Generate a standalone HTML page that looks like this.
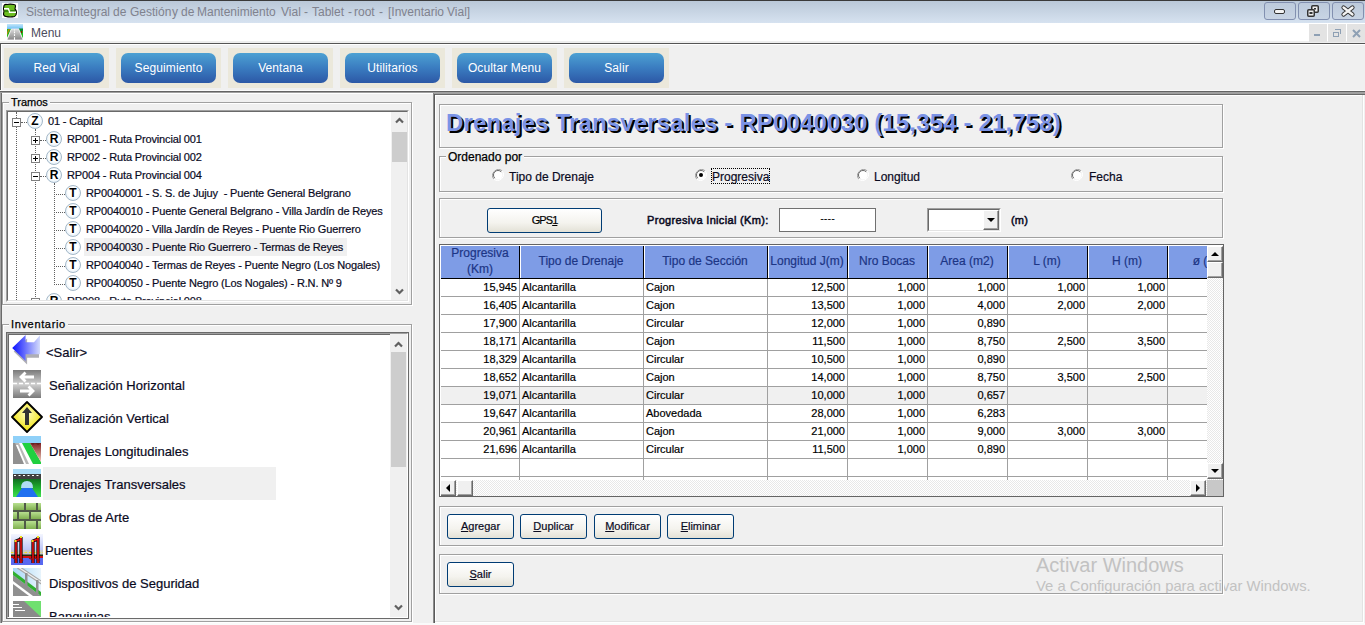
<!DOCTYPE html>
<html><head><meta charset="utf-8">
<style>
*{box-sizing:border-box;margin:0;padding:0}
html,body{width:1365px;height:625px;overflow:hidden;background:#f0f0f0;font-family:"Liberation Sans",sans-serif;color:#000}
.dk{-webkit-text-stroke:0.2px currentColor}
.a{position:absolute}
.t{position:absolute;white-space:nowrap;line-height:1}
/* title bar */
#tb{left:0;top:0;width:1365px;height:23px;background:linear-gradient(#bac8d8,#d6e2f0);border-top:1px solid #3a3a3a}
.wb{position:absolute;top:2px;width:32px;height:18px;border:1px solid #8290b0;border-radius:3px;background:linear-gradient(#bccadb,#c8d4e4)}
#mb{left:0;top:23px;width:1365px;height:20px;background:#fff}
.mdi{position:absolute;top:24px;height:18px;background:#e3e3e3}
/* toolbar */
.pn{position:absolute;top:48px;width:105px;height:40px;background:#ebe8db}
.bb{position:absolute;top:53px;width:95px;height:30px;border-radius:7px;background:linear-gradient(#4da1d3,#3a7cc0 50%,#2c58a6);color:#fff;font-size:12px;text-align:center;line-height:30px;letter-spacing:0.1px}
/* group box */
.gb{position:absolute;border:1px solid #a0a0a0;box-shadow:inset 1px 1px 0 #fff,1px 1px 0 #fff}
.gt{position:absolute;background:#f0f0f0;padding:0 2px;font-size:11px;line-height:11px;white-space:nowrap;-webkit-text-stroke:0.25px #000}
.sunk{position:absolute;border-top:1px solid #a0a0a0;border-left:1px solid #a0a0a0;border-right:1px solid #fff;border-bottom:1px solid #fff;}
.sunk>.in{position:absolute;left:0;top:0;right:0;bottom:0;border-top:1px solid #696969;border-left:1px solid #696969;border-right:1px solid #e3e3e3;border-bottom:1px solid #e3e3e3;background:#fff;overflow:hidden}
.xpb{position:absolute;border:1px solid #003c74;border-radius:3px;background:linear-gradient(#fff,#f4f3ee 60%,#e3e1d6);font-size:11px;text-align:center;white-space:nowrap}
.tr{position:absolute;left:0;white-space:nowrap;font-size:11px;line-height:18px;height:18px}
.ic{position:absolute;width:16px;height:16px;border-radius:50%;border:1px solid #a4b8c8;background:radial-gradient(circle at 50% 45%,#fff 45%,#d4e6f4);font:bold 12px/14px "Liberation Sans",sans-serif;text-align:center;color:#000}
.bx{position:absolute;width:9px;height:9px;border:1px solid #808080;background:#fff}
.dv{position:absolute;border-left:1px dotted #606060;width:0}
.dh{position:absolute;border-top:1px dotted #606060;height:0}
.inv{position:absolute;left:49px;font-size:13px;white-space:nowrap;line-height:13px}
.cell{position:absolute;font-size:11px;line-height:11px;white-space:nowrap}
</style></head><body>
<!-- TITLE BAR -->
<div id="tb" class="a"></div>
<svg class="a" style="left:0;top:0" width="20" height="20" viewBox="0 0 20 20">
<rect x="2" y="3" width="16" height="15" fill="#fff"/>
<path d="M4 5.5 Q5 4 7 4.5 Q10 3.8 14 4.5 Q15.5 4.5 15.5 6 L15 9 Q16.5 10.5 16.5 12.5 Q16.5 15.5 14.5 16.5 Q10 17.5 6 16.5 Q3.5 16 3.5 14 L4 11 Q3 9 4 5.5Z" fill="#6cbd22" stroke="#000" stroke-width="1.1"/>
<path d="M4 8.7 L8.3 8.7 L9.6 12.3 L16 12.3" fill="none" stroke="#fff" stroke-width="1.5"/>
<path d="M5 10 L8 10 L8.8 12 L5 12Z" fill="#3a8a10"/><path d="M10.5 10 L15 10 L15 11.3 L10 11.3Z" fill="#2f7a10"/>
</svg>
<div class="t" style="left:26px;top:6px;font-size:12px;color:#80828e">Sistema</div><div class="t" style="left:70px;top:6px;font-size:12px;color:#80828e">Integral</div><div class="t" style="left:113px;top:6px;font-size:12px;color:#80828e">de</div><div class="t" style="left:130px;top:6px;font-size:12px;color:#80828e">Gestión</div><div class="t" style="left:172px;top:6px;font-size:12px;color:#80828e">y</div><div class="t" style="left:181px;top:6px;font-size:12px;color:#80828e">de</div><div class="t" style="left:197px;top:6px;font-size:12px;color:#80828e">Mantenimiento</div><div class="t" style="left:281px;top:6px;font-size:12px;color:#80828e">Vial</div><div class="t" style="left:304px;top:6px;font-size:12px;color:#80828e">-</div><div class="t" style="left:312px;top:6px;font-size:12px;color:#80828e">Tablet</div><div class="t" style="left:348px;top:6px;font-size:12px;color:#80828e">-</div><div class="t" style="left:354px;top:6px;font-size:12px;color:#80828e">root</div><div class="t" style="left:379px;top:6px;font-size:12px;color:#80828e">-</div><div class="t" style="left:388px;top:6px;font-size:12px;color:#80828e">[Inventario</div><div class="t" style="left:447px;top:6px;font-size:12px;color:#80828e">Vial]</div>
<div class="wb" style="left:1264px"><div class="a" style="left:9px;top:6px;width:11px;height:5px;border:1.5px solid #333;border-radius:2px;background:#f3f3f3"></div></div>
<div class="wb" style="left:1298px"><svg class="a" style="left:8px;top:2px" width="12" height="12" viewBox="0 0 12 12"><rect x="4.75" y="0.75" width="6.5" height="6.5" rx="1" fill="#eee" stroke="#333" stroke-width="1.5"/><rect x="7" y="3" width="2" height="1.5" fill="#333"/><rect x="0.75" y="4.75" width="6.5" height="6.5" rx="1" fill="#eee" stroke="#333" stroke-width="1.5"/><rect x="2.5" y="7" width="3" height="2" fill="#333"/></svg></div>
<div class="wb" style="left:1332px"><svg class="a" style="left:9px;top:3px;overflow:visible" width="12" height="10" viewBox="0 0 12 10"><path d="M1.5 1.5 L10.5 8.5 M10.5 1.5 L1.5 8.5" stroke="#333" stroke-width="4.2" stroke-linecap="round"/><path d="M1.5 1.5 L10.5 8.5 M10.5 1.5 L1.5 8.5" stroke="#f4f4f4" stroke-width="2.3" stroke-linecap="round"/></svg></div>
<!-- MENU BAR -->
<div id="mb" class="a"></div>
<div class="a" style="left:0;top:41px;width:1365px;height:2px;background:#eeeeee"></div>
<svg class="a" style="left:7px;top:24px" width="16" height="16" viewBox="0 0 16 16">
<defs><linearGradient id="msk" x1="0" x2="0" y1="0" y2="1"><stop offset="0" stop-color="#c4e6fa"/><stop offset="1" stop-color="#6cc0f4"/></linearGradient>
<linearGradient id="mrd" x1="0" x2="0" y1="0" y2="1"><stop offset="0" stop-color="#dcdcdc"/><stop offset="1" stop-color="#858585"/></linearGradient></defs>
<rect width="16" height="5" fill="url(#msk)"/><rect y="5" width="16" height="11" fill="#fff"/>
<path d="M0 5 L4.5 5 L0 14Z" fill="#1cc01c"/><path d="M1.5 5 L3 5 L0 11 L0 9Z" fill="#d07810"/>
<path d="M11.5 5 L16 5 L16 15Z" fill="#1cc01c"/><rect x="12" y="4.5" width="4" height="2.5" fill="#0a8a2a"/><ellipse cx="14.5" cy="8" rx="0.8" ry="1" fill="#a00000"/>
<path d="M4.3 5 L11.7 5 L16 16 L0 16Z" fill="url(#mrd)" stroke="#f2eaf2" stroke-width="0.9"/>
<path d="M7.5 5.5 L7.5 6.5 M7.5 7.5 L7.5 9.3 M7.5 10.3 L7.5 12 M7.5 13.2 L7.5 16" stroke="#fff" stroke-width="1.1"/>
</svg>
<div class="t" style="left:31px;top:27px;font-size:12px;color:#4c4c5c">Menu</div>
<div class="mdi" style="left:1309px;width:18px"><div class="a" style="left:5px;top:10px;width:6px;height:2px;background:#8ea0b4"></div></div>
<div class="mdi" style="left:1328px;width:18px"><div class="a" style="left:7px;top:5px;width:6px;height:5px;border:1.5px solid #8ea0b4;border-bottom:none;border-left:none"></div><div class="a" style="left:5px;top:8px;width:6px;height:5px;border:1.5px solid #8ea0b4"></div></div>
<div class="mdi" style="left:1347px;width:18px"><svg class="a" style="left:5px;top:5px" width="9" height="9"><path d="M1 1 L8 8 M8 1 L1 8" stroke="#8ea0b4" stroke-width="2"/></svg></div>
<div class="a" style="left:0;top:43px;width:1365px;height:1px;background:#555"></div>
<div class="a" style="left:0;top:43px;width:1px;height:49px;background:#555"></div>
<div class="a" style="left:1px;top:44px;width:1364px;height:1px;background:#fff"></div>
<div class="a" style="left:1px;top:44px;width:1px;height:47px;background:#fff"></div>
<!-- toolbar panels -->
<div class="pn" style="left:4px"></div><div class="pn" style="left:116px"></div><div class="pn" style="left:228px"></div><div class="pn" style="left:340px"></div><div class="pn" style="left:452px"></div><div class="pn" style="left:564px"></div>
<div class="bb" style="left:9px">Red Vial</div>
<div class="bb" style="left:121px">Seguimiento</div>
<div class="bb" style="left:233px">Ventana</div>
<div class="bb" style="left:345px">Utilitarios</div>
<div class="bb" style="left:457px">Ocultar Menu</div>
<div class="bb" style="left:569px">Salir</div>
<!-- separator -->
<div class="a" style="left:0;top:90px;width:1365px;height:1px;background:#fafafa"></div>
<div class="a" style="left:0;top:91px;width:1365px;height:1px;background:#646464"></div>
<div class="a" style="left:0;top:92px;width:1365px;height:1px;background:#a0a0a0"></div>
<!-- LEFT PANEL -->
<div class="a" style="left:0;top:93px;width:433px;height:1px;background:#fff"></div>
<div class="a" style="left:0;top:93px;width:1px;height:530px;background:#a0a0a0"></div>
<div class="a" style="left:1px;top:93px;width:1px;height:530px;background:#6a6a6a"></div>
<div class="a" style="left:0;top:623px;width:433px;height:2px;background:#fafafa"></div>

<!-- Tramos group -->
<div class="gb" style="left:2px;top:102px;width:410px;height:203px"></div>
<div class="gt" style="left:9px;top:97px">Tramos</div>
<div class="sunk" style="left:6px;top:110px;width:403px;height:192px"><div class="in" id="tree">
<div class="a" style="left:76px;top:126px;width:263px;height:18px;background:#f0f0f0"></div>
<div class="dv" style="left:8px;top:0;height:190px"></div>
<div class="dv" style="left:27px;top:17px;height:172px"></div>
<div class="dv" style="left:46px;top:71px;height:100px"></div>
<div class="dh" style="left:13px;top:10px;width:6px"></div>
<div class="bx" style="left:4px;top:6px"><div class="a" style="left:1px;top:3px;width:5px;height:1px;background:#000"></div></div>
<div class="ic" style="left:19px;top:1px">Z</div>
<div class="tr dk" style="left:40px;top:0px;letter-spacing:-0.15px;color:#0a0a1e">01 - Capital</div>
<div class="dh" style="left:32px;top:28px;width:6px"></div>
<div class="bx" style="left:23px;top:24px"><div class="a" style="left:1px;top:3px;width:5px;height:1px;background:#000"></div><div class="a" style="left:3px;top:1px;width:1px;height:5px;background:#000"></div></div>
<div class="ic" style="left:38px;top:19px">R</div>
<div class="tr dk" style="left:59px;top:18px;letter-spacing:-0.15px;color:#0a0a1e">RP001 - Ruta Provincial 001</div>
<div class="dh" style="left:32px;top:46px;width:6px"></div>
<div class="bx" style="left:23px;top:42px"><div class="a" style="left:1px;top:3px;width:5px;height:1px;background:#000"></div><div class="a" style="left:3px;top:1px;width:1px;height:5px;background:#000"></div></div>
<div class="ic" style="left:38px;top:37px">R</div>
<div class="tr dk" style="left:59px;top:36px;letter-spacing:-0.15px;color:#0a0a1e">RP002 - Ruta Provincial 002</div>
<div class="dh" style="left:32px;top:64px;width:6px"></div>
<div class="bx" style="left:23px;top:60px"><div class="a" style="left:1px;top:3px;width:5px;height:1px;background:#000"></div></div>
<div class="ic" style="left:38px;top:55px">R</div>
<div class="tr dk" style="left:59px;top:54px;letter-spacing:-0.15px;color:#0a0a1e">RP004 - Ruta Provincial 004</div>
<div class="dh" style="left:46px;top:82px;width:11px"></div>
<div class="ic" style="left:57px;top:73px">T</div>
<div class="tr dk" style="left:78px;top:72px;letter-spacing:-0.15px;color:#0a0a1e">RP0040001 - S. S. de Jujuy &nbsp;- Puente General Belgrano</div>
<div class="dh" style="left:46px;top:100px;width:11px"></div>
<div class="ic" style="left:57px;top:91px">T</div>
<div class="tr dk" style="left:78px;top:90px;letter-spacing:-0.15px;color:#0a0a1e">RP0040010 - Puente General Belgrano - Villa Jardín de Reyes</div>
<div class="dh" style="left:46px;top:118px;width:11px"></div>
<div class="ic" style="left:57px;top:109px">T</div>
<div class="tr dk" style="left:78px;top:108px;letter-spacing:-0.15px;color:#0a0a1e">RP0040020 - Villa Jardín de Reyes - Puente Rio Guerrero</div>
<div class="dh" style="left:46px;top:136px;width:11px"></div>
<div class="ic" style="left:57px;top:127px">T</div>
<div class="tr dk" style="left:78px;top:126px;letter-spacing:-0.15px;color:#0a0a1e">RP0040030 - Puente Rio Guerrero - Termas de Reyes</div>
<div class="dh" style="left:46px;top:154px;width:11px"></div>
<div class="ic" style="left:57px;top:145px">T</div>
<div class="tr dk" style="left:78px;top:144px;letter-spacing:-0.15px;color:#0a0a1e">RP0040040 - Termas de Reyes - Puente Negro (Los Nogales)</div>
<div class="dh" style="left:46px;top:172px;width:11px"></div>
<div class="ic" style="left:57px;top:163px">T</div>
<div class="tr dk" style="left:78px;top:162px;letter-spacing:-0.15px;color:#0a0a1e">RP0040050 - Puente Negro (Los Nogales) - R.N. Nº 9</div>
<div class="dh" style="left:32px;top:190px;width:6px"></div>
<div class="bx" style="left:23px;top:186px"><div class="a" style="left:1px;top:3px;width:5px;height:1px;background:#000"></div><div class="a" style="left:3px;top:1px;width:1px;height:5px;background:#000"></div></div>
<div class="ic" style="left:38px;top:181px">R</div>
<div class="tr dk" style="left:59px;top:180px;letter-spacing:-0.15px;color:#0a0a1e">RP008 - Ruta Provincial 008</div>
<div class="a" style="left:383px;top:0;width:16px;height:188px;background:#f0f0f0">
<svg class="a" style="left:4px;top:5px" width="9" height="7"><path d="M1 5.5 L4.5 2 L8 5.5" fill="none" stroke="#606060" stroke-width="2.2"/></svg>
<div class="a" style="left:1px;top:20px;width:15px;height:30px;background:#cdcdcd"></div>
<svg class="a" style="left:4px;top:176px" width="9" height="7"><path d="M1 1.5 L4.5 5 L8 1.5" fill="none" stroke="#606060" stroke-width="2.2"/></svg>
</div>
</div></div>

<!-- Inventario group -->
<div class="gb" style="left:2px;top:324px;width:410px;height:298px"></div>
<div class="gt" style="left:9px;top:319px;letter-spacing:0.65px">Inventario</div>
<div class="a" style="left:6px;top:332px;width:403px;height:287px;border:1px solid #6a6a6a"><div class="a" style="left:0;top:0;right:0;bottom:0;border-top:1px solid #a0a0a0;border-left:1px solid #a0a0a0;border-right:1px solid #fff;border-bottom:1px solid #fff;background:#fff;overflow:hidden;box-shadow:inset 1px 1px 0 #6a6a6a" id="inv">
<div class="a" style="left:35px;top:133px;width:233px;height:33px;background:#f0f0f0"></div>
<div class="a" style="left:3px;top:0px;line-height:0"><svg width="31" height="31" viewBox="0 0 31 31"><defs><linearGradient id="gs" x1="0" x2="1"><stop offset="0" stop-color="#0a10ff"/><stop offset="1" stop-color="#d4dcfc"/></linearGradient></defs>
<path d="M2.7 17.6 L16.1 4.5 L16.1 11.7 L24.5 11.7 L28 7.5 L28 23.8 L16.1 23.8 L16.1 30.5 Z" fill="#a0a0a8" opacity="0.85"/>
<path d="M1.2 14.1 L14.6 1 L14.6 8.2 L23 8.2 L29 1.2 L29 20.3 L14.6 20.3 L14.6 27 Z" fill="url(#gs)"/></svg></div>
<div class="inv dk" style="left:38px;top:12px;color:#0a0a1e">&lt;Salir&gt;</div>
<div class="a" style="left:5px;top:36px;line-height:0"><svg width="28" height="28" viewBox="0 0 28 28"><defs><linearGradient id="gh" x1="0" x2="0" y1="0" y2="1"><stop offset="0" stop-color="#7a7a7a"/><stop offset="0.5" stop-color="#d0d0d0"/><stop offset="1" stop-color="#7a7a7a"/></linearGradient></defs>
<rect width="28" height="28" fill="url(#gh)"/><path d="M0 13.5 L28 13.5" stroke="#fff" stroke-width="1.4" stroke-dasharray="4 2"/>
<path d="M21 7 L8 7 M12.5 2.5 L8 7 L12.5 11.5" stroke="#fff" stroke-width="2.8" fill="none"/>
<path d="M7 21 L20 21 M15.5 16.5 L20 21 L15.5 25.5" stroke="#fff" stroke-width="2.8" fill="none"/></svg></div>
<div class="inv dk" style="left:41px;top:45px;color:#0a0a1e">Señalización Horizontal</div>
<div class="a" style="left:3px;top:67px;line-height:0"><svg width="32" height="32" viewBox="0 0 32 32"><defs><radialGradient id="gy" cx="0.5" cy="0.4" r="0.6"><stop offset="0" stop-color="#ffffc0"/><stop offset="1" stop-color="#f0e000"/></radialGradient></defs>
<path d="M16 1 L31 16 L16 31 L1 16 Z" fill="url(#gy)" stroke="#000" stroke-width="1.8" stroke-linejoin="round"/>
<path d="M16 6 L21 12 L18 12 L18 24 L14 24 L14 12 L11 12 Z" fill="#333"/></svg></div>
<div class="inv dk" style="left:41px;top:78px;color:#0a0a1e">Señalización Vertical</div>
<div class="a" style="left:5px;top:102px;line-height:0"><svg width="28" height="28" viewBox="0 0 28 28"><defs><linearGradient id="gbr" x1="0" x2="0" y1="0" y2="1"><stop offset="0" stop-color="#802020"/><stop offset="1" stop-color="#f0d0c0"/></linearGradient></defs><rect width="28" height="7" fill="#8fd0f8"/><rect y="7" width="28" height="21" fill="#fff"/>
<path d="M0 7 L6 7 L16 28 L0 28Z" fill="#b8b8b8"/><path d="M0 7 L2 7 L12 28 L0 28Z" fill="#909090"/><path d="M3 9 L5 9 L13 28 L11 28Z" fill="#fff"/>
<path d="M9 7 L17 7 L28 26 L28 28 L20 28 Z" fill="#20d040"/><path d="M17 7 L28 7 L28 26Z" fill="url(#gbr)"/><path d="M18 7 L20 9 L22 7 L25 9 L28 7" fill="#602020"/></svg></div>
<div class="inv dk" style="left:41px;top:111px;color:#0a0a1e">Drenajes Longitudinales</div>
<div class="a" style="left:5px;top:135px;line-height:0"><svg width="28" height="28" viewBox="0 0 28 28"><defs><linearGradient id="gg" x1="0" x2="0" y1="0" y2="1"><stop offset="0" stop-color="#107020"/><stop offset="0.5" stop-color="#20b030"/><stop offset="1" stop-color="#40e050"/></linearGradient></defs>
<rect width="28" height="5" fill="#a8dcf8"/><rect y="5" width="28" height="5" fill="#404040"/><path d="M1 6.5 L28 6.5" stroke="#fff" stroke-width="1" stroke-dasharray="2 2.5"/>
<rect y="10" width="28" height="18" fill="url(#gg)"/><path d="M8 19 Q8 12 14 12 Q20 12 20 19Z" fill="#b0ddf5"/><path d="M3 28 L9 19 L19 19 L25 28Z" fill="#2070f0"/></svg></div>
<div class="inv dk" style="left:41px;top:144px;color:#0a0a1e">Drenajes Transversales</div>
<div class="a" style="left:5px;top:169px;line-height:0"><svg width="28" height="26" viewBox="0 0 28 26"><defs><linearGradient id="gk" x1="0" x2="0" y1="0" y2="1"><stop offset="0" stop-color="#b8e090"/><stop offset="1" stop-color="#80b050"/></linearGradient></defs><rect width="28" height="26" fill="#505a48"/>
<g fill="url(#gk)"><rect x="0" y="0" width="11" height="7"/><rect x="13" y="0" width="10" height="7"/><rect x="25" y="0" width="3" height="7"/><rect x="0" y="9" width="4" height="7"/><rect x="6" y="9" width="10" height="7"/><rect x="18" y="9" width="10" height="7"/>
<rect x="0" y="18" width="11" height="8"/><rect x="13" y="18" width="10" height="8"/><rect x="25" y="18" width="3" height="8"/></g></svg></div>
<div class="inv dk" style="left:41px;top:177px;color:#0a0a1e">Obras de Arte</div>
<div class="a" style="left:3px;top:200px;line-height:0"><svg width="32" height="31" viewBox="0 0 32 31"><defs><linearGradient id="gp" x1="0" x2="0" y1="0" y2="1"><stop offset="0" stop-color="#f4f6ff"/><stop offset="1" stop-color="#8898f0"/></linearGradient></defs>
<rect width="32" height="31" fill="url(#gp)"/><rect y="22" width="32" height="9" fill="#5868f0"/>
<rect y="16" width="32" height="5" fill="#c8c8c8"/><path d="M0 18.5 L32 18.5" stroke="#f0e020" stroke-width="1.2" stroke-dasharray="2.5 2"/><rect y="20.5" width="32" height="1.5" fill="#203010"/><rect y="22" width="32" height="2" fill="#d01010"/>
<g fill="none" stroke="#000" stroke-width="3.2"><path d="M5 29 L5 7 L10 5 M10 29 L10 3"/><path d="M22 29 L22 7 L27 5 M27 29 L27 3"/></g>
<g fill="none" stroke="#e81010" stroke-width="1.6"><path d="M5 29 L5 7 L10 5 M10 29 L10 3"/><path d="M22 29 L22 7 L27 5 M27 29 L27 3"/></g>
<g fill="#f0e020"><rect x="3.5" y="6" width="2" height="2"/><rect x="9" y="2" width="2" height="2"/><rect x="20.5" y="6" width="2" height="2"/><rect x="26" y="2" width="2" height="2"/></g>
<path d="M2 24 L6 26 M8 24 L12 27 M18 24 L22 26 M24 24 L29 27" stroke="#a00808" stroke-width="1.2"/></svg></div>
<div class="inv dk" style="left:37px;top:210px;color:#0a0a1e">Puentes</div>
<div class="a" style="left:5px;top:234px;line-height:0"><svg width="28" height="28" viewBox="0 0 28 28"><defs><linearGradient id="gd" x1="0" x2="1" y1="0" y2="0"><stop offset="0" stop-color="#a8d8f8"/><stop offset="1" stop-color="#e8f4fc"/></linearGradient></defs><rect width="28" height="28" fill="url(#gd)"/>
<path d="M0 7 L28 28 L0 28Z" fill="#909090"/><path d="M0 13 L20 28 L16 28 L0 16Z" fill="#fff"/><path d="M0 3 L28 24 L28 28 L0 7Z" fill="#30b030"/>
<path d="M5 -1 L29 15" stroke="#a8a8a8" stroke-width="3.5"/><path d="M5 -1 L29 15" stroke="#f0f0f0" stroke-width="1.2"/><rect x="12" y="5" width="2.5" height="14" fill="#909090"/><rect x="23" y="12" width="2.5" height="14" fill="#909090"/></svg></div>
<div class="inv dk" style="left:41px;top:243px;color:#0a0a1e">Dispositivos de Seguridad</div>
<div class="a" style="left:5px;top:267px;line-height:0"><svg width="28" height="28" viewBox="0 0 28 28"><rect width="28" height="28" fill="#8a8a8a"/><path d="M11 0 L28 0 L28 16Z" fill="#70e070"/>
<path d="M0 3.5 L6 3.5 M0 6.5 L9 6.5 M2 9.5 L12 9.5" stroke="#fff" stroke-width="1"/></svg></div>
<div class="inv dk" style="left:41px;top:276px;color:#0a0a1e">Banquinas</div>
<div class="a" style="left:382px;top:0;width:17px;height:284px;background:#f0f0f0">
<svg class="a" style="left:4px;top:7px" width="9" height="7"><path d="M1 5.5 L4.5 2 L8 5.5" fill="none" stroke="#606060" stroke-width="2.2"/></svg>
<div class="a" style="left:1px;top:18px;width:15px;height:115px;background:#cdcdcd"></div>
<svg class="a" style="left:4px;top:270px" width="9" height="7"><path d="M1 1.5 L4.5 5 L8 1.5" fill="none" stroke="#606060" stroke-width="2.2"/></svg>
</div>
</div></div>

<!-- RIGHT PANEL -->
<div class="a" style="left:433px;top:93px;width:932px;height:1px;background:#a0a0a0"></div>
<div class="a" style="left:434px;top:94px;width:931px;height:1px;background:#696969"></div>
<div class="a" style="left:433px;top:93px;width:1px;height:532px;background:#8a8a8a"></div>
<div class="a" style="left:434px;top:94px;width:1px;height:531px;background:#5a5a5a"></div>
<div class="a" style="left:435px;top:95px;width:927px;height:1px;background:#fff"></div>
<div class="a" style="left:435px;top:95px;width:1px;height:527px;background:#fff"></div>
<div class="a" style="left:1362px;top:95px;width:1px;height:527px;background:#e3e3e3"></div>
<div class="a" style="left:1363px;top:95px;width:1px;height:528px;background:#fff"></div>
<div class="a" style="left:435px;top:621px;width:928px;height:1px;background:#e3e3e3"></div>
<div class="a" style="left:435px;top:622px;width:929px;height:1px;background:#fff"></div>
<div class="a" style="left:433px;top:623px;width:932px;height:2px;background:#fafafa"></div>

<div class="gb" style="left:439px;top:104px;width:784px;height:44px"></div>
<div class="t" style="left:446px;top:111px;font-size:24px;font-weight:bold;letter-spacing:0.15px;color:#7b93e6;text-shadow:2px 2px 0 #000">Drenajes Transversales - RP0040030 (15,354 - 21,758)</div>

<div class="gb" style="left:439px;top:156px;width:784px;height:36px"></div>
<div class="gt" style="left:446px;top:151px;font-size:12px;line-height:12px">Ordenado por</div>

<div class="gb" style="left:439px;top:198px;width:784px;height:40px"></div>

<svg class="a" style="left:492px;top:169px" width="12" height="12" viewBox="0 0 12 12">
<path d="M10.2 1.8 A6 6 0 0 0 1.8 10.2" fill="none" stroke="#a0a0a0" stroke-width="1"/>
<path d="M1.8 10.2 A6 6 0 0 0 10.2 1.8" fill="none" stroke="#fff" stroke-width="1"/>
<circle cx="6" cy="6" r="4.5" fill="#fff"/>
<path d="M9.2 2.8 A4.5 4.5 0 0 0 2.8 9.2" fill="none" stroke="#696969" stroke-width="1"/>
</svg>
<div class="t dk" style="left:509px;top:171px;font-size:12px;color:#0a0a1e">Tipo de Drenaje</div>
<svg class="a" style="left:695px;top:169px" width="12" height="12" viewBox="0 0 12 12">
<path d="M10.2 1.8 A6 6 0 0 0 1.8 10.2" fill="none" stroke="#a0a0a0" stroke-width="1"/>
<path d="M1.8 10.2 A6 6 0 0 0 10.2 1.8" fill="none" stroke="#fff" stroke-width="1"/>
<circle cx="6" cy="6" r="4.5" fill="#fff"/>
<path d="M9.2 2.8 A4.5 4.5 0 0 0 2.8 9.2" fill="none" stroke="#696969" stroke-width="1"/>
<circle cx="6" cy="6" r="2" fill="#000"/></svg>
<div class="t dk" style="left:712px;top:171px;font-size:12px;color:#0a0a1e">Progresiva</div>
<svg class="a" style="left:857px;top:169px" width="12" height="12" viewBox="0 0 12 12">
<path d="M10.2 1.8 A6 6 0 0 0 1.8 10.2" fill="none" stroke="#a0a0a0" stroke-width="1"/>
<path d="M1.8 10.2 A6 6 0 0 0 10.2 1.8" fill="none" stroke="#fff" stroke-width="1"/>
<circle cx="6" cy="6" r="4.5" fill="#fff"/>
<path d="M9.2 2.8 A4.5 4.5 0 0 0 2.8 9.2" fill="none" stroke="#696969" stroke-width="1"/>
</svg>
<div class="t dk" style="left:874px;top:171px;font-size:12px;color:#0a0a1e">Longitud</div>
<svg class="a" style="left:1071px;top:169px" width="12" height="12" viewBox="0 0 12 12">
<path d="M10.2 1.8 A6 6 0 0 0 1.8 10.2" fill="none" stroke="#a0a0a0" stroke-width="1"/>
<path d="M1.8 10.2 A6 6 0 0 0 10.2 1.8" fill="none" stroke="#fff" stroke-width="1"/>
<circle cx="6" cy="6" r="4.5" fill="#fff"/>
<path d="M9.2 2.8 A4.5 4.5 0 0 0 2.8 9.2" fill="none" stroke="#696969" stroke-width="1"/>
</svg>
<div class="t dk" style="left:1089px;top:171px;font-size:12px;color:#0a0a1e">Fecha</div>
<div class="a" style="left:711px;top:168px;width:59px;height:16px;border:1px dotted #000"></div>
<div class="xpb dk" style="left:487px;top:208px;width:115px;height:25px;line-height:23px;letter-spacing:-0.9px">GPS<u>1</u></div>
<div class="t" style="left:647px;top:215px;font-size:11px;letter-spacing:0.33px;-webkit-text-stroke:0.5px #0a0a1e;color:#0a0a1e">Progresiva Inicial (Km):</div>
<div class="a" style="left:779px;top:208px;width:97px;height:24px;border:1px solid #707070;background:#fff;font-size:11px;text-align:center;line-height:19px">----</div>
<div class="a" style="left:927px;top:208px;width:74px;height:24px;border-top:1px solid #a0a0a0;border-left:1px solid #a0a0a0;border-right:1px solid #fff;border-bottom:1px solid #fff">
<div class="a" style="left:0;top:0;right:0;bottom:0;border-top:1px solid #696969;border-left:1px solid #696969;border-right:1px solid #e3e3e3;border-bottom:1px solid #e3e3e3;background:#fff">
<div class="a" style="right:0;top:0;width:16px;height:20px;background:#f0f0f0;border-top:1px solid #fff;border-left:1px solid #fff;border-right:1px solid #696969;border-bottom:1px solid #696969;box-shadow:inset -1px -1px 0 #a0a0a0">
<svg class="a" style="left:3px;top:7px" width="8" height="5"><path d="M0 0 L8 0 L4 4Z" fill="#000"/></svg></div></div></div>
<div class="t" style="left:1011px;top:215px;font-size:11px;letter-spacing:0.2px;-webkit-text-stroke:0.5px #0a0a1e;color:#0a0a1e">(m)</div>
<div class="a" style="left:439px;top:244px;width:785px;height:253px;border:1px solid #646464"><div class="a" style="left:0;top:0;right:0;bottom:0;border-top:1px solid #fff;border-left:1px solid #fff;background:#f0f0f0;overflow:hidden" id="grid">
<div class="a" style="left:0;top:32px;width:766px;height:202px;background:#fff"></div>
<div class="a" style="left:0;top:141px;width:766px;height:17px;background:#f0f0f0"></div>
<div class="a" style="left:0;top:0;width:766px;height:32px;background:#7e9ce6"></div>
<div class="a" style="left:0;top:32px;width:766px;height:1px;background:#000"></div>
<div class="a" style="left:0px;top:-1px;width:78px;text-align:center;font-size:12px;line-height:16px;color:#1c3585;-webkit-text-stroke:0.2px #1c3585">Progresiva<br>(Km)</div>
<div class="cell dk" style="left:0px;top:36px;width:76px;text-align:right">15,945</div>
<div class="cell dk" style="left:0px;top:54px;width:76px;text-align:right">16,405</div>
<div class="cell dk" style="left:0px;top:72px;width:76px;text-align:right">17,900</div>
<div class="cell dk" style="left:0px;top:90px;width:76px;text-align:right">18,171</div>
<div class="cell dk" style="left:0px;top:108px;width:76px;text-align:right">18,329</div>
<div class="cell dk" style="left:0px;top:126px;width:76px;text-align:right">18,652</div>
<div class="cell dk" style="left:0px;top:144px;width:76px;text-align:right">19,071</div>
<div class="cell dk" style="left:0px;top:162px;width:76px;text-align:right">19,647</div>
<div class="cell dk" style="left:0px;top:180px;width:76px;text-align:right">20,961</div>
<div class="cell dk" style="left:0px;top:198px;width:76px;text-align:right">21,696</div>
<div class="a" style="left:78px;top:0;width:1px;height:32px;background:#000"></div>
<div class="a" style="left:79px;top:0;width:1px;height:32px;background:#fff"></div>
<div class="a" style="left:78px;top:33px;width:1px;height:201px;background:#a0a0a0"></div>
<div class="a" style="left:78px;top:9px;width:124px;text-align:center;font-size:12px;line-height:12px;color:#1c3585;white-space:nowrap;-webkit-text-stroke:0.2px #1c3585">Tipo de Drenaje</div>
<div class="cell dk" style="left:81px;top:36px">Alcantarilla</div>
<div class="cell dk" style="left:81px;top:54px">Alcantarilla</div>
<div class="cell dk" style="left:81px;top:72px">Alcantarilla</div>
<div class="cell dk" style="left:81px;top:90px">Alcantarilla</div>
<div class="cell dk" style="left:81px;top:108px">Alcantarilla</div>
<div class="cell dk" style="left:81px;top:126px">Alcantarilla</div>
<div class="cell dk" style="left:81px;top:144px">Alcantarilla</div>
<div class="cell dk" style="left:81px;top:162px">Alcantarilla</div>
<div class="cell dk" style="left:81px;top:180px">Alcantarilla</div>
<div class="cell dk" style="left:81px;top:198px">Alcantarilla</div>
<div class="a" style="left:202px;top:0;width:1px;height:32px;background:#000"></div>
<div class="a" style="left:203px;top:0;width:1px;height:32px;background:#fff"></div>
<div class="a" style="left:202px;top:33px;width:1px;height:201px;background:#a0a0a0"></div>
<div class="a" style="left:202px;top:9px;width:124px;text-align:center;font-size:12px;line-height:12px;color:#1c3585;white-space:nowrap;-webkit-text-stroke:0.2px #1c3585">Tipo de Sección</div>
<div class="cell dk" style="left:205px;top:36px">Cajon</div>
<div class="cell dk" style="left:205px;top:54px">Cajon</div>
<div class="cell dk" style="left:205px;top:72px">Circular</div>
<div class="cell dk" style="left:205px;top:90px">Cajon</div>
<div class="cell dk" style="left:205px;top:108px">Circular</div>
<div class="cell dk" style="left:205px;top:126px">Cajon</div>
<div class="cell dk" style="left:205px;top:144px">Circular</div>
<div class="cell dk" style="left:205px;top:162px">Abovedada</div>
<div class="cell dk" style="left:205px;top:180px">Cajon</div>
<div class="cell dk" style="left:205px;top:198px">Circular</div>
<div class="a" style="left:326px;top:0;width:1px;height:32px;background:#000"></div>
<div class="a" style="left:327px;top:0;width:1px;height:32px;background:#fff"></div>
<div class="a" style="left:326px;top:33px;width:1px;height:201px;background:#a0a0a0"></div>
<div class="a" style="left:326px;top:9px;width:80px;text-align:center;font-size:12px;line-height:12px;color:#1c3585;white-space:nowrap;-webkit-text-stroke:0.2px #1c3585">Longitud J(m)</div>
<div class="cell dk" style="left:326px;top:36px;width:78px;text-align:right">12,500</div>
<div class="cell dk" style="left:326px;top:54px;width:78px;text-align:right">13,500</div>
<div class="cell dk" style="left:326px;top:72px;width:78px;text-align:right">12,000</div>
<div class="cell dk" style="left:326px;top:90px;width:78px;text-align:right">11,500</div>
<div class="cell dk" style="left:326px;top:108px;width:78px;text-align:right">10,500</div>
<div class="cell dk" style="left:326px;top:126px;width:78px;text-align:right">14,000</div>
<div class="cell dk" style="left:326px;top:144px;width:78px;text-align:right">10,000</div>
<div class="cell dk" style="left:326px;top:162px;width:78px;text-align:right">28,000</div>
<div class="cell dk" style="left:326px;top:180px;width:78px;text-align:right">21,000</div>
<div class="cell dk" style="left:326px;top:198px;width:78px;text-align:right">11,500</div>
<div class="a" style="left:406px;top:0;width:1px;height:32px;background:#000"></div>
<div class="a" style="left:407px;top:0;width:1px;height:32px;background:#fff"></div>
<div class="a" style="left:406px;top:33px;width:1px;height:201px;background:#a0a0a0"></div>
<div class="a" style="left:406px;top:9px;width:80px;text-align:center;font-size:12px;line-height:12px;color:#1c3585;white-space:nowrap;-webkit-text-stroke:0.2px #1c3585">Nro Bocas</div>
<div class="cell dk" style="left:406px;top:36px;width:78px;text-align:right">1,000</div>
<div class="cell dk" style="left:406px;top:54px;width:78px;text-align:right">1,000</div>
<div class="cell dk" style="left:406px;top:72px;width:78px;text-align:right">1,000</div>
<div class="cell dk" style="left:406px;top:90px;width:78px;text-align:right">1,000</div>
<div class="cell dk" style="left:406px;top:108px;width:78px;text-align:right">1,000</div>
<div class="cell dk" style="left:406px;top:126px;width:78px;text-align:right">1,000</div>
<div class="cell dk" style="left:406px;top:144px;width:78px;text-align:right">1,000</div>
<div class="cell dk" style="left:406px;top:162px;width:78px;text-align:right">1,000</div>
<div class="cell dk" style="left:406px;top:180px;width:78px;text-align:right">1,000</div>
<div class="cell dk" style="left:406px;top:198px;width:78px;text-align:right">1,000</div>
<div class="a" style="left:486px;top:0;width:1px;height:32px;background:#000"></div>
<div class="a" style="left:487px;top:0;width:1px;height:32px;background:#fff"></div>
<div class="a" style="left:486px;top:33px;width:1px;height:201px;background:#a0a0a0"></div>
<div class="a" style="left:486px;top:9px;width:80px;text-align:center;font-size:12px;line-height:12px;color:#1c3585;white-space:nowrap;-webkit-text-stroke:0.2px #1c3585">Area (m2)</div>
<div class="cell dk" style="left:486px;top:36px;width:78px;text-align:right">1,000</div>
<div class="cell dk" style="left:486px;top:54px;width:78px;text-align:right">4,000</div>
<div class="cell dk" style="left:486px;top:72px;width:78px;text-align:right">0,890</div>
<div class="cell dk" style="left:486px;top:90px;width:78px;text-align:right">8,750</div>
<div class="cell dk" style="left:486px;top:108px;width:78px;text-align:right">0,890</div>
<div class="cell dk" style="left:486px;top:126px;width:78px;text-align:right">8,750</div>
<div class="cell dk" style="left:486px;top:144px;width:78px;text-align:right">0,657</div>
<div class="cell dk" style="left:486px;top:162px;width:78px;text-align:right">6,283</div>
<div class="cell dk" style="left:486px;top:180px;width:78px;text-align:right">9,000</div>
<div class="cell dk" style="left:486px;top:198px;width:78px;text-align:right">0,890</div>
<div class="a" style="left:566px;top:0;width:1px;height:32px;background:#000"></div>
<div class="a" style="left:567px;top:0;width:1px;height:32px;background:#fff"></div>
<div class="a" style="left:566px;top:33px;width:1px;height:201px;background:#a0a0a0"></div>
<div class="a" style="left:566px;top:9px;width:80px;text-align:center;font-size:12px;line-height:12px;color:#1c3585;white-space:nowrap;-webkit-text-stroke:0.2px #1c3585">L (m)</div>
<div class="cell dk" style="left:566px;top:36px;width:78px;text-align:right">1,000</div>
<div class="cell dk" style="left:566px;top:54px;width:78px;text-align:right">2,000</div>
<div class="cell dk" style="left:566px;top:90px;width:78px;text-align:right">2,500</div>
<div class="cell dk" style="left:566px;top:126px;width:78px;text-align:right">3,500</div>
<div class="cell dk" style="left:566px;top:180px;width:78px;text-align:right">3,000</div>
<div class="a" style="left:646px;top:0;width:1px;height:32px;background:#000"></div>
<div class="a" style="left:647px;top:0;width:1px;height:32px;background:#fff"></div>
<div class="a" style="left:646px;top:33px;width:1px;height:201px;background:#a0a0a0"></div>
<div class="a" style="left:646px;top:9px;width:80px;text-align:center;font-size:12px;line-height:12px;color:#1c3585;white-space:nowrap;-webkit-text-stroke:0.2px #1c3585">H (m)</div>
<div class="cell dk" style="left:646px;top:36px;width:78px;text-align:right">1,000</div>
<div class="cell dk" style="left:646px;top:54px;width:78px;text-align:right">2,000</div>
<div class="cell dk" style="left:646px;top:90px;width:78px;text-align:right">3,500</div>
<div class="cell dk" style="left:646px;top:126px;width:78px;text-align:right">2,500</div>
<div class="cell dk" style="left:646px;top:180px;width:78px;text-align:right">3,000</div>
<div class="a" style="left:726px;top:0;width:1px;height:32px;background:#000"></div>
<div class="a" style="left:727px;top:0;width:1px;height:32px;background:#fff"></div>
<div class="a" style="left:726px;top:33px;width:1px;height:201px;background:#a0a0a0"></div>
<div class="a" style="left:726px;top:9px;width:80px;text-align:center;font-size:12px;line-height:12px;color:#1c3585;white-space:nowrap;-webkit-text-stroke:0.2px #1c3585">ø (m)</div>
<div class="a" style="left:0;top:50px;width:766px;height:1px;background:#a0a0a0"></div>
<div class="a" style="left:0;top:68px;width:766px;height:1px;background:#a0a0a0"></div>
<div class="a" style="left:0;top:86px;width:766px;height:1px;background:#a0a0a0"></div>
<div class="a" style="left:0;top:104px;width:766px;height:1px;background:#a0a0a0"></div>
<div class="a" style="left:0;top:122px;width:766px;height:1px;background:#a0a0a0"></div>
<div class="a" style="left:0;top:140px;width:766px;height:1px;background:#a0a0a0"></div>
<div class="a" style="left:0;top:158px;width:766px;height:1px;background:#a0a0a0"></div>
<div class="a" style="left:0;top:176px;width:766px;height:1px;background:#a0a0a0"></div>
<div class="a" style="left:0;top:194px;width:766px;height:1px;background:#a0a0a0"></div>
<div class="a" style="left:0;top:212px;width:766px;height:1px;background:#a0a0a0"></div>
<div class="a" style="left:0;top:230px;width:766px;height:1px;background:#a0a0a0"></div>
<div class="a" style="left:766px;top:0;width:16px;height:234px;background-color:#fff;background-image:linear-gradient(45deg,#e8e8e8 25%,transparent 25%,transparent 75%,#e8e8e8 75%),linear-gradient(45deg,#e8e8e8 25%,transparent 25%,transparent 75%,#e8e8e8 75%);background-size:2px 2px;background-position:0 0,1px 1px"></div>
<div class="a" style="left:766px;top:0px;width:16px;height:16px;background:#f0f0f0;border-top:1px solid #fff;border-left:1px solid #fff;border-right:1px solid #696969;border-bottom:1px solid #696969;box-shadow:inset -1px -1px 0 #a0a0a0"><svg class="a" style="left:3px;top:5px" width="8" height="5"><path d="M4 0 L8 4 L0 4Z" fill="#000"/></svg></div>
<div class="a" style="left:766px;top:16px;width:16px;height:16px;background:#f0f0f0;border-top:1px solid #fff;border-left:1px solid #fff;border-right:1px solid #696969;border-bottom:1px solid #696969;box-shadow:inset -1px -1px 0 #a0a0a0"></div>
<div class="a" style="left:766px;top:217px;width:16px;height:16px;background:#f0f0f0;border-top:1px solid #fff;border-left:1px solid #fff;border-right:1px solid #696969;border-bottom:1px solid #696969;box-shadow:inset -1px -1px 0 #a0a0a0"><svg class="a" style="left:3px;top:5px" width="8" height="5"><path d="M0 0 L8 0 L4 4Z" fill="#000"/></svg></div>
<div class="a" style="left:0;top:234px;width:766px;height:17px;background-color:#fff;background-image:linear-gradient(45deg,#e8e8e8 25%,transparent 25%,transparent 75%,#e8e8e8 75%),linear-gradient(45deg,#e8e8e8 25%,transparent 25%,transparent 75%,#e8e8e8 75%);background-size:2px 2px;background-position:0 0,1px 1px"></div>
<div class="a" style="left:-1px;top:234px;width:16px;height:16px;background:#f0f0f0;border-top:1px solid #fff;border-left:1px solid #fff;border-right:1px solid #696969;border-bottom:1px solid #696969;box-shadow:inset -1px -1px 0 #a0a0a0"><svg class="a" style="left:5px;top:3px" width="5" height="8"><path d="M4 0 L4 8 L0 4Z" fill="#000"/></svg></div>
<div class="a" style="left:16px;top:234px;width:16px;height:16px;background:#f0f0f0;border-top:1px solid #fff;border-left:1px solid #fff;border-right:1px solid #696969;border-bottom:1px solid #696969;box-shadow:inset -1px -1px 0 #a0a0a0"></div>
<div class="a" style="left:749px;top:234px;width:16px;height:16px;background:#f0f0f0;border-top:1px solid #fff;border-left:1px solid #fff;border-right:1px solid #696969;border-bottom:1px solid #696969;box-shadow:inset -1px -1px 0 #a0a0a0"><svg class="a" style="left:5px;top:3px" width="5" height="8"><path d="M0 0 L4 4 L0 8Z" fill="#000"/></svg></div>
<div class="a" style="left:766px;top:234px;width:16px;height:17px;background:#c8c8c8"></div>
</div></div>
<div class="xpb dk" style="left:447px;top:514px;width:67px;height:25px;line-height:23px;color:#0a0a1e"><u>A</u>gregar</div>
<div class="xpb dk" style="left:520px;top:514px;width:67px;height:25px;line-height:23px;color:#0a0a1e"><u>D</u>uplicar</div>
<div class="xpb dk" style="left:594px;top:514px;width:67px;height:25px;line-height:23px;color:#0a0a1e"><u>M</u>odificar</div>
<div class="xpb dk" style="left:667px;top:514px;width:67px;height:25px;line-height:23px;color:#0a0a1e"><u>E</u>liminar</div>
<div class="xpb dk" style="left:447px;top:562px;width:67px;height:25px;line-height:23px;color:#0a0a1e"><u>S</u>alir</div>
<div class="t" style="left:1036px;top:555px;font-size:20px;color:#c2c2c2">Activar Windows</div>
<div class="t" style="left:1036px;top:579px;font-size:14.8px;color:#c2c2c2">Ve a Configuración para activar Windows.</div>
<div class="gb" style="left:439px;top:506px;width:784px;height:40px"></div>
<div class="gb" style="left:439px;top:554px;width:784px;height:40px"></div>

</body></html>
